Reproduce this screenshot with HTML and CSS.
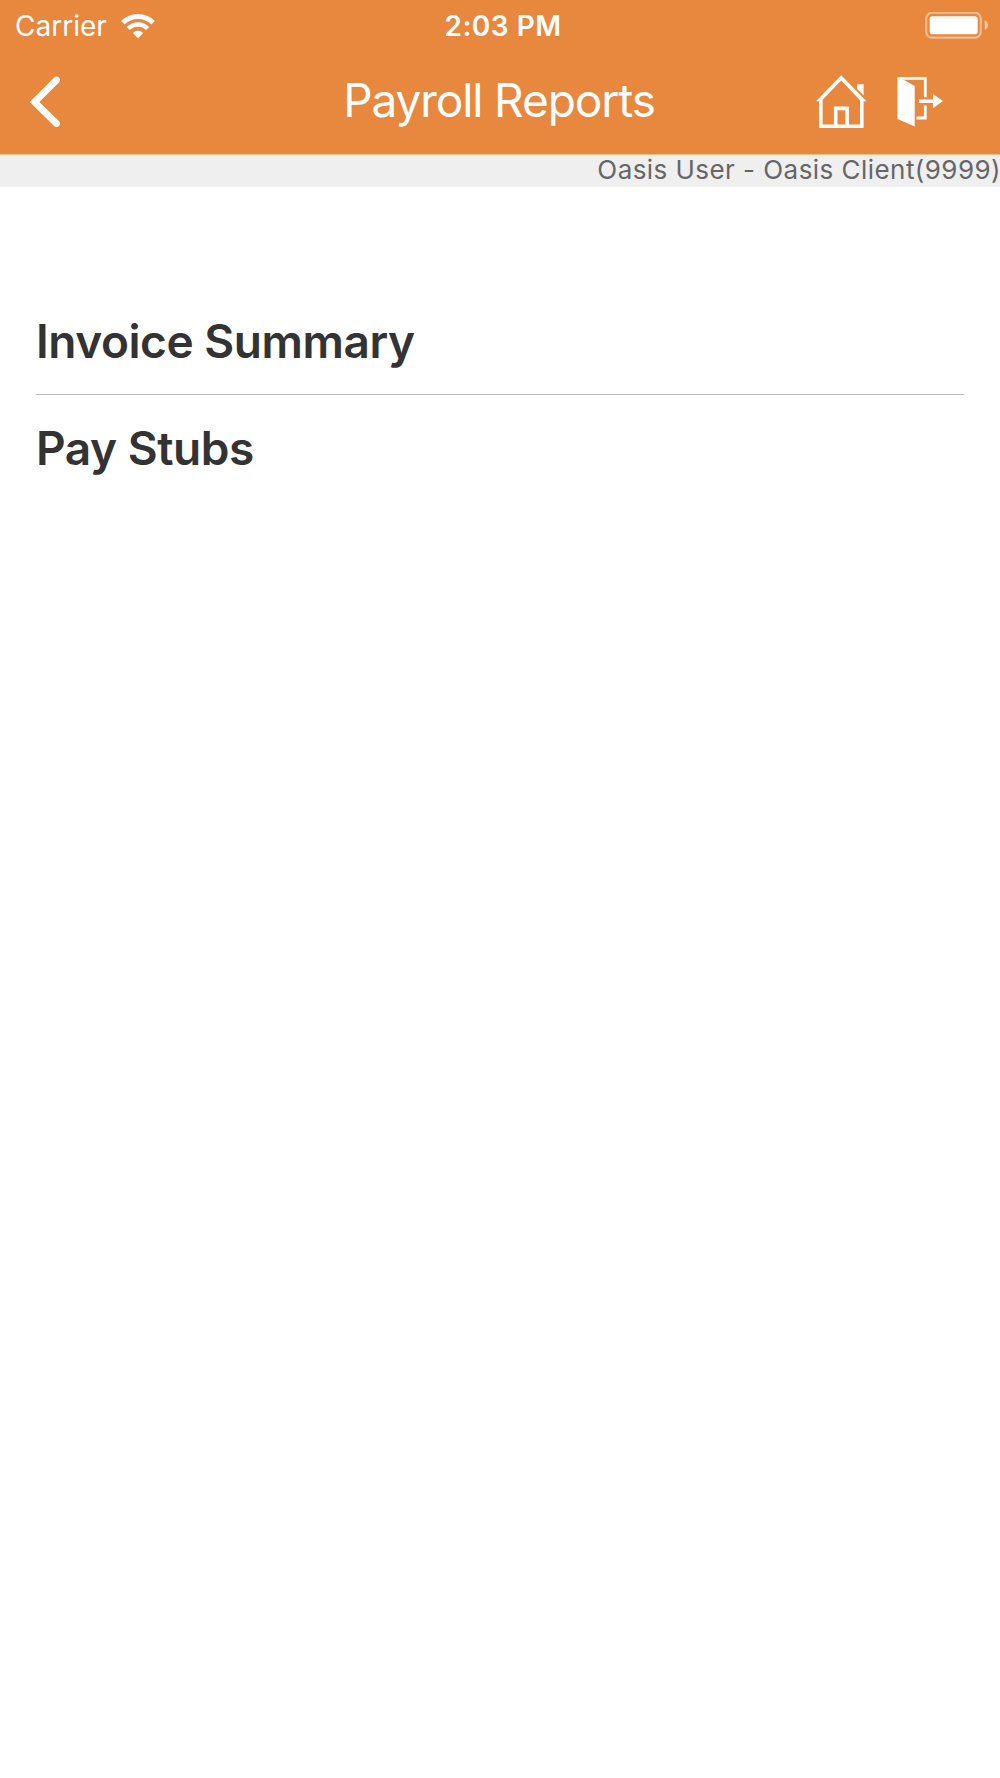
FILE: index.html
```
<!DOCTYPE html>
<html lang="en">

<head>
    <meta charset="UTF-8">
    <meta name="viewport" content="width=device-width, initial-scale=1.0">
    <title>Payroll Reports</title>
    <link rel="stylesheet" href="styles.css">
</head>

<body>

    <header class="header">
        <!-- Status Bar -->
        <div class="status-bar">
            <div class="status-left">
                <span class="carrier">Carrier</span>
                <svg class="wifi" width="34" height="25" viewBox="0 0 34 25">
                    <path d="M1.9 8.7 A21.5 21.5 0 0 1 32.1 8.7" fill="none" stroke="#fff" stroke-width="4.8" />
                    <path d="M7.3 14.5 A13.7 13.7 0 0 1 26.7 14.5" fill="none" stroke="#fff" stroke-width="4.5" />
                    <path d="M17 24.3 L11.8 18.9 A7.6 7.6 0 0 1 22.2 18.9 Z" fill="#fff" />
                </svg>
            </div>
            <span class="time">2:03 PM</span>
            <div class="status-right">
                <svg width="64" height="28" viewBox="0 0 64 28">
                    <rect x="1.2" y="0.7" width="54.6" height="25" rx="6" fill="none" stroke="#fff" stroke-opacity="0.45" stroke-width="2.2" />
                    <rect x="4.7" y="4.2" width="48" height="18" rx="2.8" fill="#fff" />
                    <path d="M59.7 8 Q63 9.5 63 13 Q63 16.5 59.7 18 Z" fill="#fff" fill-opacity="0.5" />
                </svg>
            </div>
        </div>

        <!-- Navigation Bar -->
        <nav class="nav-bar">
            <a class="back" href="#" aria-label="Back">
                <svg width="32" height="52" viewBox="0 0 32 52">
                    <path d="M26.5 4 L4.5 26 L26.5 47.5" fill="none" stroke="#fff" stroke-width="6.8" stroke-linecap="round" />
                </svg>
            </a>
            <h1>Payroll Reports</h1>
            <div class="nav-icons">
                <a href="#" aria-label="Home">
                    <svg width="52" height="54" viewBox="0 0 52 54">
                        <path d="M19.7 51.2 V33.4 H31.1 V51.2 M4.8 25 V51.2 H45.8 V25" fill="none" stroke="#fff" stroke-width="3.6" />
                        <path d="M0 26.2 L25.2 0.2 L50.5 26.2 H45 L25.2 5.4 L5.2 26.2 Z" fill="#fff" />
                        <path d="M41 9.3 H47.6 V20.2 L41 14 Z" fill="#fff" />
                    </svg>
                </a>
                <a href="#" aria-label="Log out">
                    <svg width="48" height="52" viewBox="0 0 48 52">
                        <path d="M0.5 3.3 H28.3 V22.2 M28.3 30.5 V43 H19.5" fill="none" stroke="#fff" stroke-width="2.8" />
                        <path d="M0.5 2 L7 5 L17.7 11 V51.6 L0.5 44 Z" fill="#fff" />
                        <path d="M22 24.5 H36 V19 L46 26 L36 33.3 V28 H22 Z" fill="#fff" />
                    </svg>
                </a>
            </div>
        </nav>
    </header>

    <!-- Logged in user -->
    <div class="user-bar">Oasis User - Oasis Client(9999)</div>

    <!-- Report List -->
    <ul class="report-list">
        <li>Invoice Summary</li>
        <li>Pay Stubs</li>
    </ul>

</body>

</html>
```
FILE: styles.css
```
* {
    margin: 0;
    padding: 0;
    box-sizing: border-box;
}

body {
    background: #fff;
    font-family: Inter, "Liberation Sans", sans-serif;
    color: #333;
}

svg {
    display: block;
}

/* Header */
.header {
    height: 155px;
    background: #e8873e;
    border-bottom: 1px solid #f0bd95;
    color: #fff;
}

/* Status Bar */
.status-bar {
    display: grid;
    grid-template-columns: 1fr auto 1fr;
    align-items: center;
    height: 50px;
    padding: 0 11px 0 15px;
    font-size: 28px;
    line-height: 52px;
}

.status-left {
    display: flex;
    align-items: center;
    gap: 13px;
}

.carrier {
    width: 93px;
    font-weight: 400;
    letter-spacing: 0;
}

.time {
    padding-left: 2px;
    font-weight: 600;
    letter-spacing: 0.5px;
}

.status-right {
    display: flex;
    justify-content: flex-end;
}

/* Navigation Bar */
.nav-bar {
    display: grid;
    grid-template-columns: 1fr auto 1fr;
    align-items: center;
    height: 104px;
    padding: 0 55px 0 30px;
}

.nav-bar h1 {
    margin-left: 23px;
    padding-bottom: 4px;
    font-size: 46px;
    font-weight: 400;
    line-height: 96px;
    letter-spacing: -1.1px;
}

.nav-icons {
    display: flex;
    justify-content: flex-end;
    gap: 29px;
}

/* User Bar */
.user-bar {
    height: 32px;
    margin-right: -1px;
    background: #efefef;
    color: #666;
    font-size: 26px;
    line-height: 30px;
    text-align: right;
    letter-spacing: 0.45px;
    white-space: nowrap;
}

/* Report List */
.report-list {
    margin: 100px 36px 0;
    list-style: none;
}

.report-list li {
    height: 107px;
    font-size: 46px;
    font-weight: 600;
    line-height: 109px;
    letter-spacing: -0.45px;
}

.report-list li + li {
    border-top: 1px solid #bbb;
    line-height: 106px;
}
```
